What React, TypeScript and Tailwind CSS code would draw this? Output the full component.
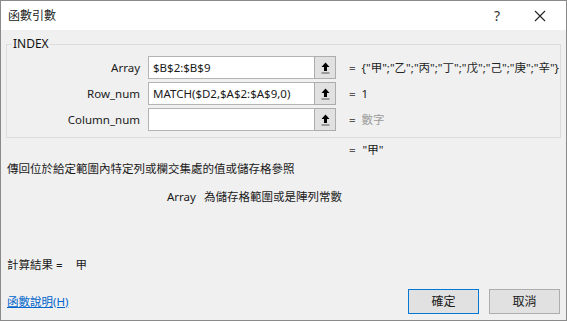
import React from 'react';

const font = { fontFamily: '"Noto Sans", "Noto Sans CJK TC", sans-serif' };

function PickButton() {
  return (
    <div className="w-[22px] h-full bg-[#e1e1e1] border border-[#adadad] flex items-center justify-center">
      <svg width="9" height="12" viewBox="0 0 9 12">
        <path d="M4.5 0.5 L8.5 5 L6 5 L6 9 L3 9 L3 5 L0.5 5 Z" fill="#000" />
        <rect x="0.5" y="10.5" width="8" height="1" fill="#555" />
      </svg>
    </div>
  );
}

function ArgRow({ label, value, result, muted }: { label: string; value: string; result: string; muted?: boolean }) {
  return (
    <div className="flex items-center h-[23px]">
      <div className="w-[133px] text-right pr-0">{label}</div>
      <div className="ml-[8px] flex h-full">
        <div className="w-[166px] h-full bg-white border border-[#b4b4b4] border-r-0 pl-[4px] flex items-center whitespace-nowrap overflow-hidden">
          {value}
        </div>
        <PickButton />
      </div>
      <div className="ml-[13px] text-[#555]">=</div>
      <div className={'ml-[6px] whitespace-nowrap ' + (muted ? 'text-[#9a9a9a]' : 'text-[#222]')}>{result}</div>
    </div>
  );
}

export default function App() {
  return (
    <div className="w-[567px] h-[321px] border border-[#8a8a8a] bg-[#f0f0f0] flex flex-col text-[11.5px] text-[#1a1a1a] leading-[16px]" style={font}>
      <div className="h-[29px] bg-white flex items-center pl-[7px] shrink-0">
        <div className="text-[12px] text-[#222]">函數引數</div>
        <div className="ml-auto flex items-center">
          <span className="text-[14px] text-[#333] mr-[34px]">?</span>
          <svg width="12" height="12" viewBox="0 0 12 12" className="mr-[20px]">
            <path d="M1 1 L11 11 M11 1 L1 11" stroke="#222" strokeWidth="1.1" />
          </svg>
        </div>
      </div>

      <div className="flex-1 flex flex-col px-[5px]">
        <fieldset className="mt-[6px] border border-[#dcdcdc] pb-[6px] pt-[4px] flex flex-col gap-[3px]">
          <legend className="ml-[5px] px-[1px] text-[12px] text-[#111]">INDEX</legend>
          <ArgRow label="Array" value="$B$2:$B$9" result={'{"甲";"乙";"丙";"丁";"戊";"己";"庚";"辛"}'} />
          <ArgRow label="Row_num" value="MATCH($D2,$A$2:$A$9,0)" result="1" />
          <ArgRow label="Column_num" value="" result="數字" muted />
        </fieldset>

        <div className="mt-[4px] flex pl-[343px]">
          <span className="text-[#555]">=</span>
          <span className="ml-[7px]">"甲"</span>
        </div>

        <div className="mt-[3px] pl-[1px]">傳回位於給定範圍內特定列或欄交集處的值或儲存格參照</div>

        <div className="mt-[12px] pl-[161px] flex">
          <span>Array</span>
          <span className="ml-[8px]">為儲存格範圍或是陣列常數</span>
        </div>

        <div className="mt-[52px] pl-[1px] flex">
          <span>計算結果 =</span>
          <span className="ml-[13px]">甲</span>
        </div>

        <div className="mt-[16px] flex items-center">
          <a className="pl-[1px] text-[#0066cc] underline" href="#">函數說明(H)</a>
          <div className="ml-auto flex gap-[10px] mr-[1px]">
            <button className="w-[71px] h-[25px] bg-[#e1e1e1] border border-[#0078d7] text-[12px]">確定</button>
            <button className="w-[71px] h-[25px] bg-[#e1e1e1] border border-[#adadad] text-[12px]">取消</button>
          </div>
        </div>
      </div>
    </div>
  );
}
